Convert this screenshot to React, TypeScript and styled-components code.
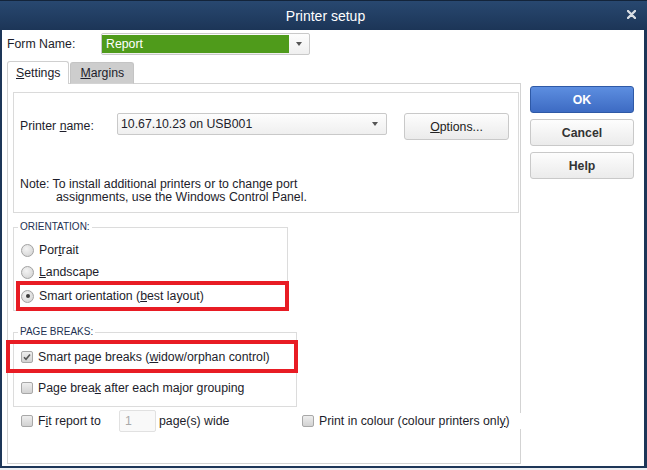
import styled, { createGlobalStyle } from 'styled-components'

const GlobalStyle = createGlobalStyle`
  html, body {
    margin: 0;
    padding: 0;
    background: #eceef1;
  }
  body {
    font-family: "Liberation Sans", Arial, sans-serif;
    font-size: 12.3px;
    color: #1d1d2b;
  }
  * { box-sizing: border-box; }
`

const Window = styled.div`
  width: 647px;
  height: 468px;
  display: flex;
  flex-direction: column;
`

const TitleBar = styled.div`
  height: 30px;
  flex: none;
  display: flex;
  align-items: center;
  background: linear-gradient(#284870, #1c3557);
  border-top: 1px solid #13243a;
  color: #fff;
`

const Title = styled.div`
  flex: 1;
  text-align: center;
  font-size: 14px;
  padding-left: 24px;
`

const Close = styled.svg`
  width: 9px;
  height: 9px;
  margin-right: 11px;
  margin-bottom: 3px;
`

const Body = styled.div`
  flex: 1;
  background: #fff;
  border: 2px solid #1d3658;
  border-top: 0;
  border-right-width: 3px;
  display: flex;
  flex-direction: column;
  padding: 3px 0 0 5px;
`

const FormRow = styled.div`
  display: flex;
  align-items: center;
  height: 22px;
`

const FormLabel = styled.span`
  width: 94px;
`

const FormSelect = styled.div`
  width: 209px;
  height: 22px;
  border: 1px solid #c9c9c9;
  border-radius: 2px;
  padding: 1px 0 1px 0;
  display: flex;
  background: linear-gradient(#fdfdfd, #efefef);
`

const GreenValue = styled.div`
  width: 187px;
  background: #4f9b1b;
  color: #fff;
  padding-left: 4px;
  line-height: 18px;
`

const Arrow = styled.div`
  flex: 1;
  display: flex;
  align-items: center;
  justify-content: center;
  &::after {
    content: '';
    border-left: 3.5px solid transparent;
    border-right: 3.5px solid transparent;
    border-top: 4px solid #555;
  }
`

const Main = styled.div`
  display: flex;
  margin-top: 6px;
`

const LeftCol = styled.div`
  width: 514px;
  display: flex;
  flex-direction: column;
`

const Tabs = styled.div`
  display: flex;
  align-items: flex-end;
  height: 23px;
  gap: 1px;
  margin-bottom: -1px;
  position: relative;
  z-index: 1;
`

const Tab = styled.div<{ $active?: boolean }>`
  height: ${({ $active }) => ($active ? '23px' : '22px')};
  padding: 0 ${({ $active }) => ($active ? '8px' : '9px')};
  display: flex;
  align-items: center;
  border: 1px solid ${({ $active }) => ($active ? '#cfcfcf' : '#c4c4c4')};
  border-bottom: ${({ $active }) => ($active ? '0' : '1px solid #d3d3d3')};
  border-radius: 3px 3px 0 0;
  background: ${({ $active }) => ($active ? '#fff' : '#cdcdcd')};
`

const Panel = styled.div`
  height: 381px;
  border: 1px solid #d3d3d3;
  padding: 8px 1px 0 5px;
  display: flex;
  flex-direction: column;
`

const PrinterBox = styled.div`
  width: 506px;
  height: 121px;
  border: 1px solid #dadada;
  padding: 20px 0 0 6px;
  display: flex;
  flex-direction: column;
`

const PrinterRow = styled.div`
  display: flex;
  align-items: flex-start;
`

const PrinterLabel = styled.span`
  width: 97px;
  line-height: 22px;
  padding-top: 2px;
`

const Select = styled.div`
  width: 270px;
  height: 22px;
  border: 1px solid #c9c9c9;
  border-radius: 2px;
  background: linear-gradient(#fdfdfd, #efefef);
  display: flex;
  align-items: center;
  padding: 0 8px 0 3px;
  justify-content: space-between;
  &::after {
    content: '';
    border-left: 3.5px solid transparent;
    border-right: 3.5px solid transparent;
    border-top: 4px solid #555;
  }
`

const Button = styled.div<{ $primary?: boolean }>`
  height: 27px;
  display: flex;
  align-items: center;
  justify-content: center;
  border-radius: 3px;
  border: 1px solid ${({ $primary }) => ($primary ? '#2e59a6' : '#c9c9c9')};
  background: ${({ $primary }) =>
    $primary ? 'linear-gradient(#5d8ee0, #3d6bc3)' : 'linear-gradient(#fdfdfd, #ebebeb)'};
  color: ${({ $primary }) => ($primary ? '#fff' : '#333')};
  font-weight: bold;
`

const OptionsButton = styled(Button)`
  width: 105px;
  margin-left: 17px;
  font-weight: normal;
  color: #222;
`

const Note = styled.div`
  margin-top: 38px;
  line-height: 13px;
`

const NoteIndent = styled.span`
  display: block;
  padding-left: 36px;
`

const Group = styled.fieldset<{ $width: number; $top: number; $bottom: number }>`
  width: ${({ $width }) => $width}px;
  margin: ${({ $top }) => $top}px 0 0 0;
  padding: 0 0 ${({ $bottom }) => $bottom}px 0;
  border: 1px solid #dcdcdc;
  min-width: 0;
`

const Legend = styled.legend`
  font-size: 10px;
  line-height: 10px;
  padding: 0 2px;
  margin-left: 4px;
  color: #223052;
`

const Row = styled.label<{ $mark?: boolean }>`
  display: flex;
  align-items: center;
  gap: 5px;
  height: 22px;
  padding-left: 7px;
  ${({ $mark }) =>
    $mark &&
    `
    position: relative;
    border: 4px solid #e81c24;
  `}
`

const OrientMark = styled(Row)`
  height: 30px;
  margin: -2px -2px -1px 2px;
  padding-left: 1px;
`

const BreakMark = styled(Row)`
  height: 33px;
  margin: 3px -2px 0 -8px;
  padding-left: 11px;
`

const BreakRow = styled(Row)`
  margin-top: 4px;
`

const FirstRow = styled(Row)`
  margin-top: 7px;
`

const FitRow = styled.div`
  display: flex;
  align-items: center;
  height: 22px;
  margin-top: 3px;
  padding-left: 8px;
`

const FitLabel = styled.span`
  width: 81px;
  margin-left: 5px;
`

const NumInput = styled.div`
  width: 37px;
  height: 22px;
  border: 1px solid #e1e1e1;
  border-radius: 2px;
  background: #f9f9f9;
  color: #a9a9a9;
  padding-left: 5px;
  line-height: 20px;
`

const After = styled.span`
  margin-left: 3px;
`

const ColourItem = styled.div`
  margin-left: auto;
  margin-right: -4px;
  width: 225px;
  height: 16px;
  background: #fff;
  display: flex;
  align-items: center;
  gap: 5px;
  padding-left: 4px;
`

const Box = styled.span`
  width: 12px;
  height: 12px;
  flex: none;
  border: 1px solid #a8a8a8;
  border-radius: 2px;
  background: linear-gradient(#eeeeee, #d2d2d2);
  display: flex;
  align-items: center;
  justify-content: center;
`

const Round = styled.span<{ $on?: boolean }>`
  width: 13px;
  height: 13px;
  flex: none;
  border: 1px solid #a2a2a2;
  border-radius: 50%;
  background: radial-gradient(circle at 40% 35%, #f4f4f4, #cfcfcf);
  display: flex;
  align-items: center;
  justify-content: center;
  &::after {
    content: '';
    display: ${({ $on }) => ($on ? 'block' : 'none')};
    width: 4px;
    height: 4px;
    border-radius: 50%;
    background: #3a3a3a;
  }
`

const RightCol = styled.div`
  width: 104px;
  margin-left: 9px;
  padding-top: 25px;
  display: flex;
  flex-direction: column;
  gap: 6px;
`

function CheckBox ({ checked }: { checked?: boolean }) {
  return (
    <Box>
      {checked && (
        <svg width='8' height='8' viewBox='0 0 8 8'>
          <path d='M1 4.2 L3 6.2 L7 1.5' fill='none' stroke='#555' strokeWidth='1.6' />
        </svg>
      )}
    </Box>
  )
}

export default function App () {
  return (
    <>
      <GlobalStyle />
      <Window>
        <TitleBar>
          <Title>Printer setup</Title>
          <Close viewBox='0 0 9 9'>
            <path d='M1 1 L8 8 M8 1 L1 8' stroke='#d8dde4' strokeWidth='2.4' strokeLinecap='round' />
          </Close>
        </TitleBar>

        <Body>
          <FormRow>
            <FormLabel>Form Name:</FormLabel>
            <FormSelect>
              <GreenValue>Report</GreenValue>
              <Arrow />
            </FormSelect>
          </FormRow>

          <Main>
            <LeftCol>
              <Tabs>
                <Tab $active><span><u>S</u>ettings</span></Tab>
                <Tab><span><u>M</u>argins</span></Tab>
              </Tabs>

              <Panel>
                <PrinterBox>
                  <PrinterRow>
                    <PrinterLabel>Printer <u>n</u>ame:</PrinterLabel>
                    <Select>10.67.10.23 on USB001</Select>
                    <OptionsButton><span><u>O</u>ptions...</span></OptionsButton>
                  </PrinterRow>
                  <Note>
                    Note: To install additional printers or to change port
                    <NoteIndent>assignments, use the Windows Control Panel.</NoteIndent>
                  </Note>
                </PrinterBox>

                <Group $width={275} $top={9} $bottom={0}>
                  <Legend>ORIENTATION:</Legend>
                  <FirstRow><Round /><span>Por<u>t</u>rait</span></FirstRow>
                  <Row><Round /><span><u>L</u>andscape</span></Row>
                  <OrientMark $mark><Round $on /><span>Smart orientation (<u>b</u>est layout)</span></OrientMark>
                </Group>

                <Group $width={284} $top={16} $bottom={7}>
                  <Legend>PAGE BREAKS:</Legend>
                  <BreakMark $mark><CheckBox checked /><span>Smart page breaks (<u>w</u>idow/orphan control)</span></BreakMark>
                  <BreakRow><CheckBox /><span>Page brea<u>k</u> after each major grouping</span></BreakRow>
                </Group>

                <FitRow>
                  <CheckBox />
                  <FitLabel>F<u>i</u>t report to</FitLabel>
                  <NumInput>1</NumInput>
                  <After>page(s) wide</After>
                  <ColourItem>
                    <CheckBox />
                    <span>Print in colour (colour printers onl<u>y</u>)</span>
                  </ColourItem>
                </FitRow>
              </Panel>
            </LeftCol>

            <RightCol>
              <Button $primary>OK</Button>
              <Button>Cancel</Button>
              <Button>Help</Button>
            </RightCol>
          </Main>
        </Body>
      </Window>
    </>
  )
}
